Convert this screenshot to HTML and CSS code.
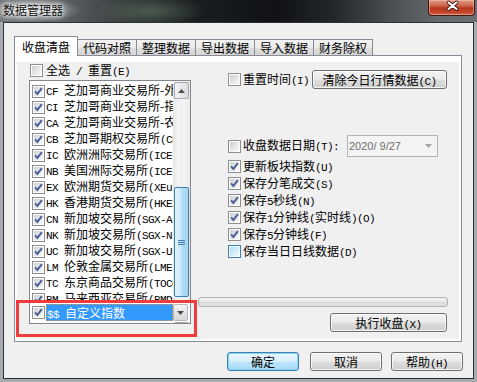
FILE: index.html
```
<!DOCTYPE html>
<html lang="zh-CN">
<head>
<meta charset="utf-8">
<title>数据管理器</title>
<link rel="stylesheet" href="styles.css">
</head>
<body>
<svg class="defs" width="0" height="0" aria-hidden="true">
  <defs>
    <linearGradient id="gin" x1="0" y1="0" x2="1" y2="1"><stop offset="0" stop-color="#cdd0d5"/><stop offset="1" stop-color="#f9f9f9"/></linearGradient>
    <linearGradient id="ghov" x1="0" y1="0" x2="1" y2="1"><stop offset="0" stop-color="#b4def6"/><stop offset="1" stop-color="#eef8fe"/></linearGradient>
    <symbol id="on" viewBox="0 0 13 13">
      <rect x=".5" y=".5" width="12" height="12" fill="#fdfdfd" stroke="#8e8f8f"/>
      <rect x="2" y="2" width="9" height="9" fill="url(#gin)"/>
      <path d="M3.1 6.3 L5.4 8.9 L9.9 3.2" fill="none" stroke="#4a5d94" stroke-width="1.9"/>
    </symbol>
    <symbol id="off" viewBox="0 0 13 13">
      <rect x=".5" y=".5" width="12" height="12" fill="#fdfdfd" stroke="#8e8f8f"/>
      <rect x="2" y="2" width="9" height="9" fill="url(#gin)"/>
    </symbol>
    <symbol id="offh" viewBox="0 0 13 13">
      <rect x=".5" y=".5" width="12" height="12" fill="#f4fbff" stroke="#3c7fb1"/>
      <rect x="2" y="2" width="9" height="9" fill="url(#ghov)"/>
    </symbol>
  </defs>
</svg>
<div class="win">
  <div class="titlebar">
    <span class="title">数据管理器</span>
    <div class="close">
      <svg width="47" height="15" viewBox="0 0 47 15"><path d="M19.5 2.5 L27.5 9 M27.5 2.5 L19.5 9" stroke="#3a1710" stroke-width="3.6" stroke-linecap="round"/><path d="M19.5 2.5 L27.5 9 M27.5 2.5 L19.5 9" stroke="#ffffff" stroke-width="2" stroke-linecap="round"/></svg>
    </div>
  </div>
  <div class="client">
    <div class="tabs">
      <div class="tab sel">收盘清盘</div>
      <div class="tab">代码对照</div>
      <div class="tab">整理数据</div>
      <div class="tab">导出数据</div>
      <div class="tab">导入数据</div>
      <div class="tab">财务除权</div>
    </div>
    <div class="panel">
      <div class="page">
        <div class="leftcol">
          <div class="allrow"><svg class="cb" viewBox="0 0 13 13"><use href="#off"/></svg><span class="lbl">全选<span class="m"> / </span>重置<span class="m">(E)</span></span></div>
          <div class="listbox">
            <div class="items">
              <div class="item"><svg class="cb" viewBox="0 0 13 13"><use href="#on"/></svg><span class="txt"><span class="m">CF </span>芝加哥商业交易所-外汇</span></div>
              <div class="item"><svg class="cb" viewBox="0 0 13 13"><use href="#on"/></svg><span class="txt"><span class="m">CI </span>芝加哥商业交易所-指数</span></div>
              <div class="item"><svg class="cb" viewBox="0 0 13 13"><use href="#on"/></svg><span class="txt"><span class="m">CA </span>芝加哥商业交易所-农产品</span></div>
              <div class="item"><svg class="cb" viewBox="0 0 13 13"><use href="#on"/></svg><span class="txt"><span class="m">CB </span>芝加哥期权交易所<span class="m">(CBOE)</span></span></div>
              <div class="item"><svg class="cb" viewBox="0 0 13 13"><use href="#on"/></svg><span class="txt"><span class="m">IC </span>欧洲洲际交易所<span class="m">(ICE)</span></span></div>
              <div class="item"><svg class="cb" viewBox="0 0 13 13"><use href="#on"/></svg><span class="txt"><span class="m">NB </span>美国洲际交易所<span class="m">(ICE)</span></span></div>
              <div class="item"><svg class="cb" viewBox="0 0 13 13"><use href="#on"/></svg><span class="txt"><span class="m">EX </span>欧洲期货交易所<span class="m">(XEurex)</span></span></div>
              <div class="item"><svg class="cb" viewBox="0 0 13 13"><use href="#on"/></svg><span class="txt"><span class="m">HK </span>香港期货交易所<span class="m">(HKEX)</span></span></div>
              <div class="item"><svg class="cb" viewBox="0 0 13 13"><use href="#on"/></svg><span class="txt"><span class="m">CN </span>新加坡交易所<span class="m">(SGX-A)</span></span></div>
              <div class="item"><svg class="cb" viewBox="0 0 13 13"><use href="#on"/></svg><span class="txt"><span class="m">NK </span>新加坡交易所<span class="m">(SGX-N)</span></span></div>
              <div class="item"><svg class="cb" viewBox="0 0 13 13"><use href="#on"/></svg><span class="txt"><span class="m">UC </span>新加坡交易所<span class="m">(SGX-U)</span></span></div>
              <div class="item"><svg class="cb" viewBox="0 0 13 13"><use href="#on"/></svg><span class="txt"><span class="m">LM </span>伦敦金属交易所<span class="m">(LME)</span></span></div>
              <div class="item"><svg class="cb" viewBox="0 0 13 13"><use href="#on"/></svg><span class="txt"><span class="m">TC </span>东京商品交易所<span class="m">(TOCOM)</span></span></div>
              <div class="item"><svg class="cb" viewBox="0 0 13 13"><use href="#on"/></svg><span class="txt"><span class="m">BM </span>马来西亚交易所<span class="m">(BMD)</span></span></div>
            </div>
            <div class="vscroll">
              <div class="sbtn"><svg width="7" height="4" viewBox="0 0 7 4"><path d="M0 4 L3.5 0 L7 4 Z" fill="#4d4d4d"/></svg></div>
              <div class="track">
                <div class="thumb"><svg width="7" height="5" viewBox="0 0 7 5"><path d="M0 .5 H7 M0 2.5 H7 M0 4.5 H7" stroke="#3b7aae" stroke-width="1"/></svg></div>
              </div>
              <div class="sbtn"></div>
            </div>
            <div class="editor">
              <svg class="cb" viewBox="0 0 13 13"><use href="#on"/></svg>
              <div class="edtext"><span class="m">$$ </span>自定义指数</div>
              <div class="drop"><svg width="7" height="4" viewBox="0 0 7 4"><path d="M0 0 L3.5 4 L7 0 Z" fill="#4d4d4d"/></svg></div>
            </div>
          </div>
        </div>
        <div class="rightcol">
          <div class="row1">
            <svg class="cb" viewBox="0 0 13 13"><use href="#off"/></svg>
            <span class="lbl">重置时间<span class="m">(I)</span></span>
            <div class="btn wide">清除今日行情数据<span class="m">(C)</span></div>
          </div>
          <div class="row2">
            <svg class="cb" viewBox="0 0 13 13"><use href="#off"/></svg>
            <span class="lbl">收盘数据日期<span class="m">(T):</span></span>
            <div class="datebox"><span class="date">2020/ 9/27</span><svg width="7" height="4" viewBox="0 0 7 4"><path d="M0 0 L3.5 4 L7 0 Z" fill="#a6a6a6"/></svg></div>
          </div>
          <div class="chkrow first"><svg class="cb" viewBox="0 0 13 13"><use href="#on"/></svg><span class="lbl">更新板块指数<span class="m">(U)</span></span></div>
          <div class="chkrow"><svg class="cb" viewBox="0 0 13 13"><use href="#on"/></svg><span class="lbl">保存分笔成交<span class="m">(S)</span></span></div>
          <div class="chkrow"><svg class="cb" viewBox="0 0 13 13"><use href="#on"/></svg><span class="lbl">保存<span class="m">5</span>秒线<span class="m">(N)</span></span></div>
          <div class="chkrow"><svg class="cb" viewBox="0 0 13 13"><use href="#on"/></svg><span class="lbl">保存<span class="m">1</span>分钟线<span class="m">(</span>实时线<span class="m">)(O)</span></span></div>
          <div class="chkrow"><svg class="cb" viewBox="0 0 13 13"><use href="#on"/></svg><span class="lbl">保存<span class="m">5</span>分钟线<span class="m">(F)</span></span></div>
          <div class="chkrow"><svg class="cb" viewBox="0 0 13 13"><use href="#offh"/></svg><span class="lbl">保存当日日线数据<span class="m">(D)</span></span></div>
          <div class="progress"></div>
          <div class="btn exec">执行收盘<span class="m">(X)</span></div>
        </div>
      </div>
    </div>
    <div class="buttons">
      <div class="btn bb def">确定</div>
      <div class="btn bb cancel">取消</div>
      <div class="btn bb">帮助<span class="m">(H)</span></div>
    </div>
  </div>
  <div class="highlight"></div>
</div>
</body>
</html>
```
FILE: styles.css
```
* { box-sizing: border-box; }
html, body { margin: 0; padding: 0; }
body {
  width: 477px;
  height: 382px;
  overflow: hidden;
  background: #a9acaf;
  font: 12px/16px "Noto Sans CJK SC", sans-serif;
  color: #000;
}
.defs { position: absolute; width: 0; height: 0; overflow: hidden; }
.m {
  font-family: "Liberation Mono", monospace;
  font-size: 11px;
  letter-spacing: -0.6px;
}
.win {
  position: relative;
  width: 477px;
  height: 382px;
  display: flex;
  flex-direction: column;
}
.titlebar {
  height: 22px;
  flex: none;
  display: flex;
  justify-content: space-between;
  align-items: flex-start;
  background:
    radial-gradient(ellipse 48px 12px at 33px 10px, rgba(235,235,235,.75), rgba(235,235,235,0)),
    radial-gradient(ellipse 55px 14px at 150px 11px, rgba(95,125,95,.55), rgba(95,125,95,0)),
    linear-gradient(90deg, #6f7377 0%, #5a5e62 14%, #33373a 28%, #1a1d20 42%, #101215 58%, #24272a 70%, #4c4f52 82%, #66696c 92%, #6c6f72 100%);
}
.title {
  margin: 3px 0 0 3px;
  line-height: 14px;
  color: #101010;
  text-shadow: 0 0 3px #fff, 0 0 6px #fff, 0 0 10px rgba(255,255,255,.8);
}
.close {
  width: 47px;
  height: 16px;
  margin-right: 2px;
  border: 1px solid #3b1a14;
  border-top: none;
  border-radius: 0 0 4px 4px;
  background: linear-gradient(#df9a88 0%, #d06a52 35%, #b7361f 55%, #c4482d 85%, #d86a4c 100%);
  box-shadow: inset 0 0 0 1px rgba(255,210,190,.45);
}
.close svg { display: block; }
.client {
  flex: 1;
  margin: 0 3px 3px 3px;
  border: 1px solid #2d3135;
  background: #f0f0f0;
  display: flex;
  flex-direction: column;
}
.tabs {
  display: flex;
  align-items: flex-end;
  height: 19px;
  margin: 13px 0 0 10px;
}
.tab {
  width: 60px;
  height: 16px;
  margin-left: -1px;
  border: 1px solid #898c95;
  border-bottom: none;
  background: linear-gradient(#f3f3f3 0%, #ebebeb 50%, #dedede 51%, #d6d6d6 100%);
  text-align: center;
  line-height: 15px;
}
.tab.sel {
  width: 64px;
  height: 20px;
  margin-left: 0;
  margin-bottom: -1px;
  background: #fff;
  line-height: 19px;
  position: relative;
  z-index: 1;
}
.panel {
  margin-left: 10px;
  width: 448px;
  height: 287px;
  border: 1px solid #898c95;
  background: #fff;
  padding: 6px 2px 2px 2px;
  display: flex;
}
.page {
  flex: 1;
  background: #f0f0f0;
  display: flex;
}
.cb { width: 13px; height: 13px; flex: none; display: block; }
.leftcol {
  margin-left: 12px;
  width: 162px;
  display: flex;
  flex-direction: column;
}
.allrow {
  margin-top: 2px;
  height: 13px;
  padding-left: 1px;
  display: flex;
  align-items: center;
  white-space: nowrap;
}
.allrow .lbl { margin-left: 3px; }
.listbox {
  position: relative;
  margin-top: 3px;
  height: 244px;
  border: 1px solid #828790;
  background: #fff;
  display: flex;
}
.items {
  flex: 1;
  min-width: 0;
  overflow: hidden;
  padding-top: 2px;
}
.item {
  height: 16px;
  padding-left: 2px;
  display: flex;
  align-items: center;
  white-space: nowrap;
}
.item .cb { margin-right: 1px; }
.txt { white-space: pre; }
.vscroll {
  width: 17px;
  flex: none;
  display: flex;
  flex-direction: column;
  background: linear-gradient(90deg, #e6e6e6, #f2f2f2 30%, #f2f2f2 70%, #e9e9e9);
}
.sbtn {
  height: 17px;
  flex: none;
  margin: 1px 1px 0 1px;
  border: 1px solid #a9abaf;
  border-radius: 2px;
  background: linear-gradient(90deg, #f4f4f4, #e8e8e8 50%, #dcdcdc);
  display: flex;
  align-items: center;
  justify-content: center;
}
.track {
  flex: 1;
  padding-top: 88px;
}
.thumb {
  height: 110px;
  margin: 0 1px;
  border: 1px solid #3c7fb1;
  border-radius: 2px;
  background: linear-gradient(90deg, #e3f4fc 0%, #c9eafa 45%, #b0dcf4 55%, #a6d6f0 100%);
  display: flex;
  align-items: center;
  justify-content: center;
}
.editor {
  position: absolute;
  left: 0;
  right: 0;
  top: 222px;
  height: 19px;
  padding-left: 2px;
  background: #fff;
  display: flex;
  align-items: center;
}
.edtext {
  margin-left: 1px;
  width: 127px;
  height: 17px;
  background: #3399ff;
  color: #fff;
  outline: 1px dotted #d69a4a;
  outline-offset: -1px;
  padding-left: 1px;
  line-height: 17px;
  white-space: pre;
}
.drop {
  width: 15px;
  height: 17px;
  border: 1px solid #b4b7bb;
  border-radius: 2px;
  background: linear-gradient(#f4f4f4, #e6e6e6 50%, #d8d8d8);
  display: flex;
  align-items: center;
  justify-content: center;
}
.rightcol {
  margin-left: 7px;
  width: 250px;
  display: flex;
  flex-direction: column;
}
.lbl { margin-left: 2px; white-space: nowrap; }
.row1 {
  margin-top: 8px;
  height: 19px;
  padding-left: 30px;
  display: flex;
  align-items: center;
}
.btn {
  height: 19px;
  border: 1px solid #707070;
  border-radius: 3px;
  background: linear-gradient(#f2f2f2 0%, #ebebeb 48%, #dddddd 52%, #cfcfcf 100%);
  box-shadow: inset 0 0 0 1px rgba(255,255,255,.75);
  text-align: center;
  line-height: 17px;
  white-space: nowrap;
}
.btn.wide { margin-left: auto; margin-right: 1px; width: 135px; }
.row2 {
  margin-top: 46px;
  height: 22px;
  padding-left: 30px;
  display: flex;
  align-items: center;
}
.datebox {
  margin-left: auto;
  margin-right: 10px;
  width: 91px;
  height: 22px;
  border: 1px solid #b1b4b8;
  background: #f4f4f4;
  display: flex;
  align-items: center;
  justify-content: space-between;
  padding: 0 5px 0 1px;
}
.date {
  font-family: "Liberation Sans", sans-serif;
  font-size: 11px;
  color: #6d6d6d;
  white-space: pre;
}
.chkrow {
  height: 17px;
  padding-left: 30px;
  display: flex;
  align-items: center;
}
.chkrow.first { margin-top: 1px; }
.progress {
  margin-top: 37px;
  height: 10px;
  border: 1px solid #b2b2b2;
  border-radius: 3px;
  background: linear-gradient(#f3f3f3, #e4e4e4 50%, #dadada 51%, #e2e2e2);
}
.btn.exec {
  margin-top: 6px;
  align-self: flex-end;
  margin-right: 1px;
  width: 117px;
}
.buttons {
  display: flex;
  justify-content: flex-end;
  margin: 10px 10px 0 0;
}
.btn.bb { width: 72px; }
.btn.def {
  margin-right: 11px;
  border-color: #3c7fb1;
  background: linear-gradient(#eaf6fd 0%, #d9f0fc 48%, #bee6fd 52%, #a7d9f5 100%);
  box-shadow: inset 0 0 0 1px #8ad2f2;
}
.btn.cancel { margin-right: 9px; }
.highlight {
  position: absolute;
  left: 16px;
  top: 300px;
  width: 181px;
  height: 37px;
  border: 3px solid #f03c3c;
}
```
